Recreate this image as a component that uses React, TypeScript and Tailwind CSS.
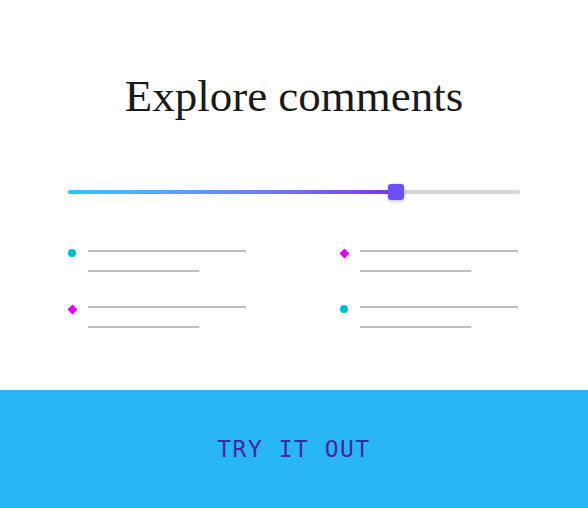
import React from "react"

type Item = { shape: "dot" | "diamond" }

const rows: Item[][] = [
  [{ shape: "dot" }, { shape: "diamond" }],
  [{ shape: "diamond" }, { shape: "dot" }],
]

function Marker({ shape }: Item) {
  if (shape === "dot") {
    return <span className="block h-2 w-2 rounded-full bg-[#00bcd4]" />
  }
  return <span className="block h-[7px] w-[7px] rotate-45 bg-[#e000f5]" />
}

function Comment({ shape }: Item) {
  return (
    <div className="flex items-start gap-3">
      <div className="mt-[2px] flex h-[6px] w-2 items-center justify-center">
        <Marker shape={shape} />
      </div>
      <div className="flex flex-col gap-[18px] pt-[2px]">
        <div className="h-[2px] w-[158px] bg-[#bdbdbd]" />
        <div className="h-[2px] w-[111px] bg-[#bdbdbd]" />
      </div>
    </div>
  )
}

export default function App() {
  const value = 72.5

  return (
    <div className="flex h-[508px] w-[588px] flex-col bg-white">
      <div className="flex flex-1 flex-col">
        <h1 className="pt-[70px] text-center font-['Liberation_Serif',serif] text-[45px] font-light leading-[52px] text-[#1a1a1a]">
          Explore comments
        </h1>

        {/* slider */}
        <div className="mt-[68px] px-[68px]">
          <div className="relative h-[4px] rounded-full bg-[#d6d6d6]">
            <div
              className="h-full rounded-full bg-gradient-to-r from-[#1ecbf6] to-[#7b2cf0]"
              style={{ width: `${value}%` }}
            />
            <div
              className="absolute top-[-6px] h-4 w-4 -translate-x-1/2 rounded-[3px] bg-[#6b4ff3] shadow-[0_1px_4px_rgba(80,60,200,0.35)]"
              style={{ left: `${value}%` }}
            />
          </div>
        </div>

        {/* comments */}
        <div className="mt-[54px] flex flex-col gap-[32px] pl-[68px]">
          {rows.map((row, i) => (
            <div key={i} className="grid grid-cols-[272px_1fr]">
              {row.map((item, j) => (
                <Comment key={j} shape={item.shape} />
              ))}
            </div>
          ))}
        </div>
      </div>

      <button className="flex h-[118px] w-full items-center justify-center bg-[#29b6f6] font-['DejaVu_Sans_Mono',monospace] text-[23px] tracking-[1.5px] text-[#4527a0]">
        TRY IT OUT
      </button>
    </div>
  )
}
